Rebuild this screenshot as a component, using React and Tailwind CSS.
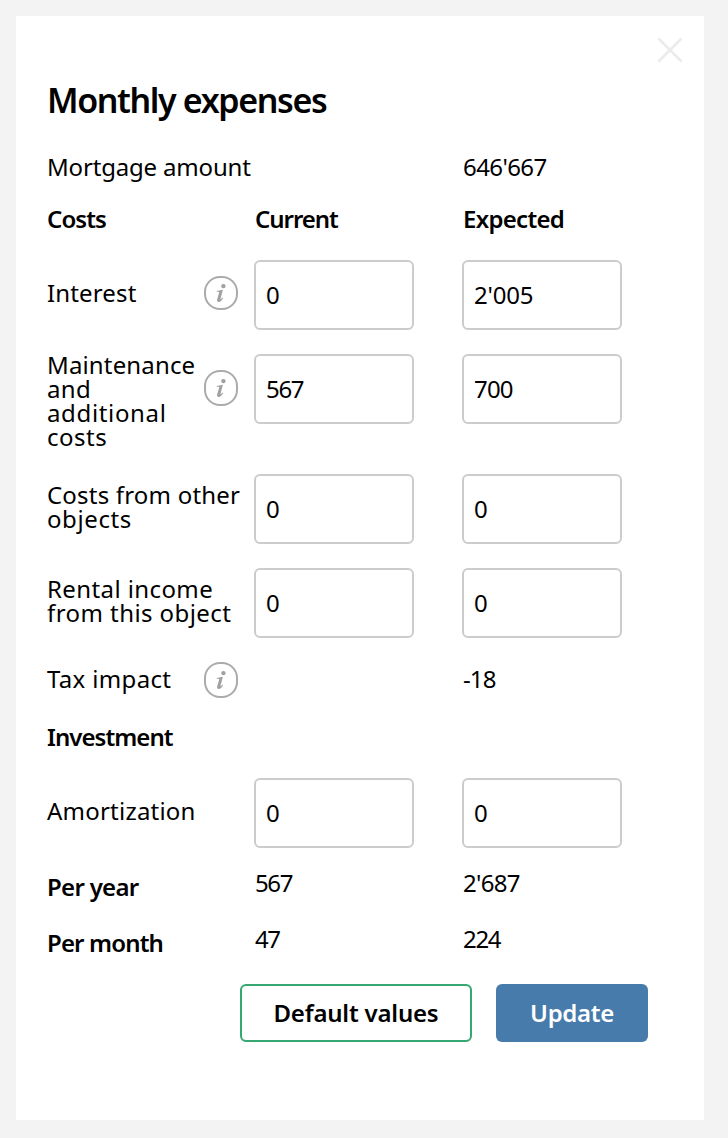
import React from "react";

function Text({ children, t = "", bold = false }) {
  return (
    <span className={`block whitespace-nowrap ${bold ? "font-semibold" : ""} ${t}`}>{children}</span>
  );
}

function Info({ h = "h-9" }) {
  return (
    <span className={`flex w-[34px] ${h} shrink-0 items-center justify-center rounded-[16px] border-2 border-[#ababab] text-[#a0a0a0]`}>
      <svg width="12" height="20" viewBox="0 0 12 20" className="shrink-0" fill="currentColor">
        <circle cx="8.4" cy="3.1" r="2.2" />
        <path d="M1.8 8 L7.9 6.8 L5.5 15.8 C5.3 16.7 5.8 16.6 7.5 14.5 L8.2 15 C6.6 17.6 5.3 18.9 3.8 18.9 C2.3 18.9 1.8 17.9 2.2 16.3 L4.2 9.4 C4.4 8.6 3.6 8.6 1.6 8.7 Z" />
      </svg>
    </span>
  );
}

function Row({ h, label, pt = "", icon, current, expected }) {
  return (
    <div className={`grid grid-cols-[207px_208px_160px] items-start ${h}`}>
      <div className="flex items-start">
        <div className={`w-[157px] shrink-0 ${pt}`}>{label}</div>
        {icon}
      </div>
      <div>{current}</div>
      <div>{expected}</div>
    </div>
  );
}

function Field({ value, t = "" }) {
  return (
    <input
      defaultValue={value}
      className={`block h-[70px] w-40 rounded-[6px] border-2 border-[#cccccc] bg-white px-[10px] pb-0.5 outline-none ${t}`}
    />
  );
}

export default function App() {
  return (
    <div className="h-[1138px] w-[728px] bg-[#f3f3f3] p-4 font-['Noto_Sans',sans-serif] text-[24px] leading-[24px] text-black">
      <div className="relative h-[1104px] w-[688px] bg-white pl-[31px] pt-16">
        <button aria-label="Close" className="absolute right-[21px] top-[21px]">
          <svg width="26" height="26" viewBox="0 0 26 26" className="block">
            <path d="M1.5 1.5 24.5 24.5 M24.5 1.5 1.5 24.5" stroke="#ebebeb" strokeWidth="2.6" />
          </svg>
        </button>
        <h1 className="h-[75px] whitespace-nowrap text-[34px] font-semibold leading-[40px] tracking-[-1.38px]">Monthly expenses</h1>
        <Row h="h-[52px]" label={<Text t="tracking-[-0.18px]">Mortgage amount</Text>} expected={<Text t="pl-px tracking-[-0.6px]">646'667</Text>} />
        <Row h="h-[53px]" label={<Text bold t="tracking-[-0.9px]">Costs</Text>}
          current={<Text bold t="pl-px tracking-[-1.05px]">Current</Text>}
          expected={<Text bold t="pl-px tracking-[-0.7px]">Expected</Text>} />
        <Row h="h-[94px]" pt="pt-[21px]" label={<Text t="tracking-[0.15px]">Interest</Text>}
          icon={<div className="pt-4"><Info h="h-[34px]" /></div>}
          current={<Field value="0" />} expected={<Field value="2'005" t="tracking-[-0.2px]" />} />
        <Row h="h-[120px]" pt="-mt-px"
          label={
            <>
              <Text t="tracking-[0.15px]">Maintenance</Text>
              <Text t="tracking-[0.3px]">and</Text>
              <Text t="tracking-[0.65px]">additional</Text>
              <Text t="tracking-[0.5px]">costs</Text>
            </>
          }
          icon={<div className="pt-4"><Info /></div>}
          current={<Field value="567" t="tracking-[-1.3px]" />} expected={<Field value="700" t="tracking-[-0.8px]" />} />
        <Row h="h-[94px]" pt="pt-[9px]"
          label={<><Text t="tracking-[0.2px]">Costs from other</Text><Text t="tracking-[0.6px]">objects</Text></>}
          current={<Field value="0" />} expected={<Field value="0" />} />
        <Row h="h-[94px]" pt="pt-[9px]"
          label={<><Text t="tracking-[0.4px]">Rental income</Text><Text t="tracking-[0.43px]">from this object</Text></>}
          current={<Field value="0" />} expected={<Field value="0" />} />
        <Row h="h-[63px]" pt="pt-[5px]" label={<Text t="tracking-[0.35px]">Tax impact</Text>} icon={<Info />}
          expected={<div className="pt-[5px]"><Text t="pl-px tracking-[-0.9px]">-18</Text></div>} />
        <Row h="h-[53px]" label={<Text bold t="tracking-[-0.95px]">Investment</Text>} />
        <Row h="h-[93px]" pt="pt-[21px]" label={<Text t="tracking-[0.22px]">Amortization</Text>}
          current={<Field value="0" />} expected={<Field value="0" />} />
        <Row h="h-14" pt="pt-1" label={<Text bold t="tracking-[-0.7px]">Per year</Text>}
          current={<Text t="pl-px tracking-[-1.4px]">567</Text>} expected={<Text t="pl-px tracking-[-0.7px]">2'687</Text>} />
        <Row h="h-[57px]" pt="pt-1" label={<Text bold t="tracking-[-0.85px]">Per month</Text>}
          current={<Text t="pl-px tracking-[-1.6px]">47</Text>} expected={<Text t="pl-px tracking-[-1.3px]">224</Text>} />
        <div className="flex gap-6 pl-[193px] font-semibold">
          <button className="h-[58px] w-[232px] whitespace-nowrap rounded-[6px] border-2 border-[#34a870] tracking-[-0.2px]">Default values</button>
          <button className="h-[58px] w-[152px] whitespace-nowrap rounded-[6px] bg-[#477bac] tracking-[-0.3px] text-white">Update</button>
        </div>
      </div>
    </div>
  );
}
